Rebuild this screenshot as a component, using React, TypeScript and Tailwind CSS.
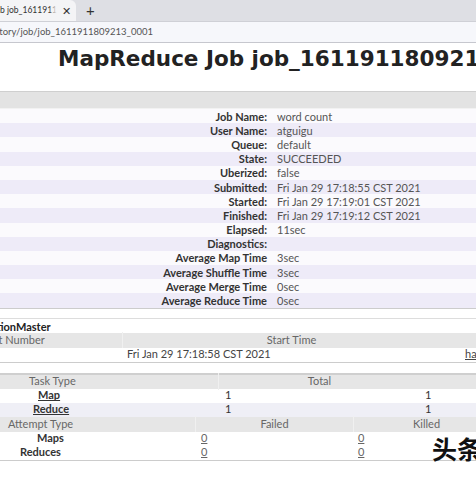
import React from 'react';

const info: [string, string][] = [
  ['Job Name:', 'word count'],
  ['User Name:', 'atguigu'],
  ['Queue:', 'default'],
  ['State:', 'SUCCEEDED'],
  ['Uberized:', 'false'],
  ['Submitted:', 'Fri Jan 29 17:18:55 CST 2021'],
  ['Started:', 'Fri Jan 29 17:19:01 CST 2021'],
  ['Finished:', 'Fri Jan 29 17:19:12 CST 2021'],
  ['Elapsed:', '11sec'],
  ['Diagnostics:', ''],
  ['Average Map Time', '3sec'],
  ['Average Shuffle Time', '3sec'],
  ['Average Merge Time', '0sec'],
  ['Average Reduce Time', '0sec'],
];

const App: React.FC = () => {
  return (
    <div className="relative w-[476px] h-[477px] overflow-hidden bg-white font-['Lato',sans-serif] text-[11px]">
      {/* browser tab strip */}
      <div className="flex h-[21px] bg-[#dedfe4]">
        <div className="flex w-[76px] shrink-0 items-center bg-[#f4f4f6] rounded-tr-[6px]">
          <div className="relative flex w-[57px] shrink-0 justify-end overflow-hidden whitespace-nowrap text-[8.5px] text-[#333]">
            <span>MapReduce Job job_1611911</span>
            <div className="absolute right-0 top-0 h-full w-[8px] bg-gradient-to-r from-transparent to-[#f4f4f6]" />
          </div>
          <span className="ml-[5px] text-[11px] leading-none text-[#333]">✕</span>
        </div>
        <div className="ml-[10px] flex items-center text-[15px] leading-none text-[#333]">+</div>
      </div>
      {/* address bar */}
      <div className="flex h-[22px] items-center border-t border-t-[#cfd0d6] border-b border-b-[#c6c7ce] bg-[#f6f7fb]">
        <div className="flex w-[153px] shrink-0 justify-end overflow-hidden whitespace-nowrap text-[9.5px] text-[#555]">
          <span>hadoop102:19888/jobhistory/job/job_1611911809213_0001</span>
        </div>
      </div>
      {/* header */}
      <div className="h-[49px] border-b border-[#cfcfcf] bg-white pl-[58px] pt-[2px]">
        <div className="whitespace-nowrap font-['DejaVu_Sans',sans-serif] text-[21.5px] font-bold leading-[27px] text-[#222]">
          MapReduce Job job_1611911809213_0001
        </div>
      </div>
      <div className="h-[17px] border-b border-[#f2f2f2] bg-[#e3e3e3]" />
      {/* job info */}
      <div className="border-b border-[#cccccc]">
        {info.map(([k, v], i) => (
          <div
            key={k}
            className={`flex h-[14.2px] items-center whitespace-nowrap leading-none ${i % 2 === 0 ? 'bg-[#fbfafd]' : 'bg-[#eeebf8]'}`}
          >
            <div className="w-[267px] shrink-0 text-right font-bold text-[#333]">{k}</div>
            <div className="pl-[10px] text-[#555]">{v}</div>
          </div>
        ))}
      </div>
      {/* application master */}
      <div className="mt-[9px] border-t border-[#dddddd]">
        <div className="flex h-[14px] items-end overflow-hidden whitespace-nowrap font-bold leading-[13px] text-[#222]">
          <span className="-ml-[40px]">ApplicationMaster</span>
        </div>
        <div className="flex h-[15px] items-center whitespace-nowrap bg-[#e6e6e6] text-[#666]">
          <div className="w-[122px] shrink-0 overflow-hidden">
            <span className="-ml-[37px] inline-block">Attempt Number</span>
          </div>
          <div className="w-[338px] shrink-0 border-l border-[#f0f0f0] text-center">Start Time</div>
          <div className="flex-1 border-l border-[#f0f0f0]" />
        </div>
        <div className="flex h-[15px] items-center whitespace-nowrap border-b border-[#cccccc] text-[#444]">
          <div className="w-[122px] shrink-0" />
          <div className="w-[338px] shrink-0 pl-[5px]">Fri Jan 29 17:18:58 CST 2021</div>
          <div className="shrink-0 pl-[5px] underline">hadoop102:8042</div>
        </div>
      </div>
      {/* tasks */}
      <div className="mt-[10px] border-t-2 border-[#cfcfcf]">
        <div className="flex h-[14px] items-center whitespace-nowrap bg-[#e6e6e6] text-[#666]">
          <div className="w-[218px] shrink-0 pl-[29px]">Task Type</div>
          <div className="w-[202px] shrink-0 border-l border-[#f0f0f0] text-center">Total</div>
          <div className="flex-1 border-l border-[#f0f0f0]" />
        </div>
        <div className="flex h-[14px] items-center whitespace-nowrap bg-white text-[#333]">
          <div className="w-[218px] shrink-0 pl-[38px] font-bold underline">Map</div>
          <div className="w-[202px] shrink-0 pl-[7px]">1</div>
          <div className="pl-[5px]">1</div>
        </div>
        <div className="flex h-[14px] items-center whitespace-nowrap bg-[#efeff6] text-[#333]">
          <div className="w-[218px] shrink-0 pl-[33px] font-bold underline">Reduce</div>
          <div className="w-[202px] shrink-0 pl-[7px]">1</div>
          <div className="pl-[5px]">1</div>
        </div>
        <div className="flex h-[15px] items-center whitespace-nowrap bg-[#e6e6e6] text-[#666]">
          <div className="w-[195px] shrink-0 pl-[8px]">Attempt Type</div>
          <div className="w-[158px] shrink-0 border-l border-[#f0f0f0] text-center">Failed</div>
          <div className="w-[146px] shrink-0 border-l border-[#f0f0f0] text-center">Killed</div>
        </div>
        <div className="flex h-[14px] items-center whitespace-nowrap text-[#333]">
          <div className="w-[195px] shrink-0 pl-[37px] font-bold">Maps</div>
          <div className="w-[158px] shrink-0 pl-[6px] text-[#666] underline">0</div>
          <div className="pl-[5px] text-[#666] underline">0</div>
        </div>
        <div className="flex h-[15px] items-center whitespace-nowrap border-b border-[#cccccc] text-[#333]">
          <div className="w-[195px] shrink-0 pl-[20px] font-bold">Reduces</div>
          <div className="w-[158px] shrink-0 pl-[6px] text-[#666] underline">0</div>
          <div className="pl-[5px] text-[#666] underline">0</div>
        </div>
      </div>
      {/* watermark */}
      <div className="absolute left-[432px] top-[436px] whitespace-nowrap font-['Noto_Sans_CJK_SC',sans-serif] text-[25px] font-bold leading-none text-[#111]">
        头条
      </div>
    </div>
  );
};

export default App;
